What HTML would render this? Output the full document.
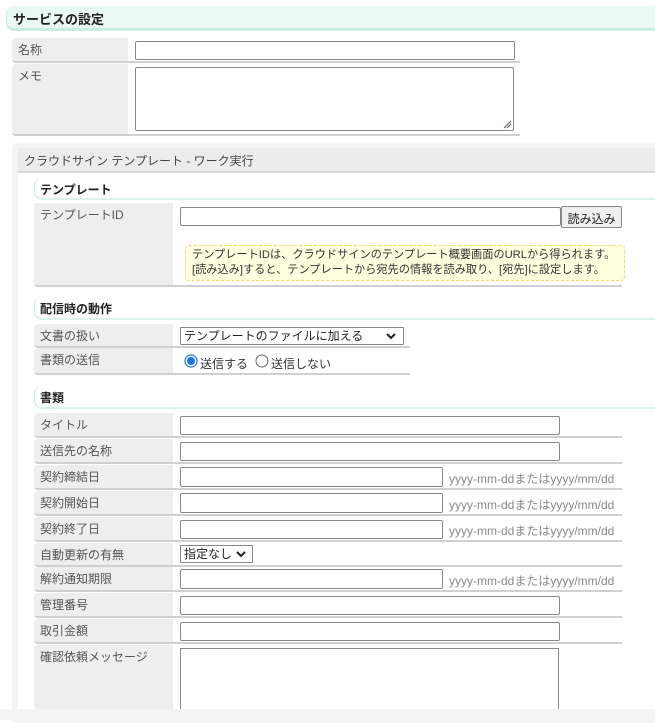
<!DOCTYPE html>
<html><head><meta charset="utf-8">
<style>
*{box-sizing:border-box;margin:0;padding:0}
body{width:655px;height:720px;background:#fff;font-family:"Liberation Sans","Noto Sans CJK JP",sans-serif;font-size:12px;color:#333;position:relative;overflow:hidden}
.a{position:absolute}
.h1{left:6px;top:6px;width:660px;height:25px;background:#eaf8f3;border:1px solid #c8eee0;border-right:none;border-top:none;border-bottom:3px solid #c8eee0;border-radius:8px 0 0 8px;font-weight:bold;font-size:13px;padding:3px 0 0 6px;color:#222}
.lab{background:#eeeeee;color:#555;padding:3px 0 0 6px;border-radius:4px 0 0 4px}
.row{border-bottom:2px solid #d0d0d0;border-radius:0 0 0 4px}
.inp{background:#fff;border:1px solid #888;border-radius:2px}
.sec{background:#fff;border:1px solid #c8eee0;border-right:none;border-top:none;border-bottom:2px solid #d8f3ea;border-radius:8px 0 0 8px;font-weight:bold;font-size:12px;padding:3px 0 0 5px;color:#222}
.hint{color:#888;font-size:12px}
</style></head><body>
<div class="a h1">サービスの設定</div>

<div class="a row" style="left:12px;top:38px;width:508px;height:25px"></div>
<div class="a lab" style="left:12px;top:38px;width:116px;height:23px">名称</div>
<div class="a inp" style="left:135px;top:41px;width:380px;height:19px"></div>
<div class="a row" style="left:12px;top:64px;width:508px;height:72px"></div>
<div class="a lab" style="left:12px;top:64px;width:116px;height:70px">メモ</div>
<div class="a inp" style="left:135px;top:67px;width:379px;height:64px"></div>
<svg class="a" style="left:502px;top:119px" width="10" height="10"><path d="M2 9L9 2M5 9L9 5" stroke="#555" stroke-width="1"/></svg>

<div class="a" style="left:12px;top:143px;width:650px;height:580px;background:#f4f4f4;border-radius:5px"></div>
<div class="a" style="left:18px;top:148px;width:640px;height:25px;background:#ececec;border-bottom:2px solid #d8d8d8;padding:4px 0 0 6px;color:#444">クラウドサイン テンプレート - ワーク実行</div>
<div class="a" style="left:18px;top:173px;width:640px;height:536px;background:#fff"></div>

<div class="a sec" style="left:34px;top:178px;width:625px;height:22px">テンプレート</div>
<div class="a row" style="left:34px;top:203px;width:588px;height:84px"></div>
<div class="a lab" style="left:34px;top:203px;width:139px;height:82px">テンプレートID</div>
<div class="a inp" style="left:180px;top:207px;width:381px;height:19px"></div>
<div class="a" style="left:561px;top:206px;width:61px;height:22px;background:#f0f0f0;border:1px solid #888;border-radius:2px;text-align:center;padding-top:3px;color:#222">読み込み</div>
<div class="a" style="left:185px;top:245px;width:440px;height:36px;background:#ffffe0;border:1px dashed #e6dc70;border-radius:4px;padding:2px 0 0 6px;line-height:15px;color:#333;font-size:11.2px;white-space:nowrap;overflow:hidden">テンプレートIDは、クラウドサインのテンプレート概要画面のURLから得られます。<br>[読み込み]すると、テンプレートから宛先の情報を読み取り、[宛先]に設定します。</div>

<div class="a sec" style="left:34px;top:297px;width:625px;height:23px">配信時の動作</div>
<div class="a row" style="left:34px;top:324px;width:376px;height:24px"></div>
<div class="a lab" style="left:34px;top:324px;width:139px;height:22px">文書の扱い</div>
<div class="a inp" style="left:180px;top:327px;width:224px;height:18px;border-radius:1px;padding:0 0 0 3px;font-size:12px;line-height:16px;color:#222">テンプレートのファイルに加える</div>
<svg class="a" style="left:386px;top:332px" width="10" height="8"><path d="M1 2L5 6L9 2" stroke="#222" stroke-width="2" fill="none"/></svg>
<div class="a row" style="left:34px;top:348px;width:376px;height:27px"></div>
<div class="a lab" style="left:34px;top:348px;width:139px;height:25px">書類の送信</div>
<svg class="a" style="left:184px;top:354px" width="14" height="14"><circle cx="7" cy="7" r="6" fill="#fff" stroke="#1a73e8" stroke-width="1.2"/><circle cx="7" cy="7" r="4" fill="#1a73e8"/></svg>
<div class="a" style="left:200px;top:355px;font-size:12px;color:#333">送信する</div>
<svg class="a" style="left:255px;top:354px" width="14" height="14"><circle cx="7" cy="7" r="6" fill="#fff" stroke="#666" stroke-width="1"/></svg>
<div class="a" style="left:271px;top:355px;font-size:12px;color:#333">送信しない</div>

<div class="a sec" style="left:34px;top:386px;width:625px;height:23px">書類</div>

<div class="a row" style="left:34px;top:413px;width:588px;height:25px"></div>
<div class="a lab" style="left:34px;top:413px;width:139px;height:23px">タイトル</div>
<div class="a inp" style="left:180px;top:416px;width:380px;height:19px"></div>
<div class="a row" style="left:34px;top:439px;width:588px;height:25px"></div>
<div class="a lab" style="left:34px;top:439px;width:139px;height:23px">送信先の名称</div>
<div class="a inp" style="left:180px;top:442px;width:380px;height:19px"></div>
<div class="a row" style="left:34px;top:465px;width:588px;height:25px"></div>
<div class="a lab" style="left:34px;top:465px;width:139px;height:23px">契約締結日</div>
<div class="a inp" style="left:180px;top:467px;width:263px;height:20px"></div>
<div class="a hint" style="left:449px;top:470px">yyyy-mm-ddまたはyyyy/mm/dd</div>
<div class="a row" style="left:34px;top:491px;width:588px;height:25px"></div>
<div class="a lab" style="left:34px;top:491px;width:139px;height:23px">契約開始日</div>
<div class="a inp" style="left:180px;top:493px;width:263px;height:20px"></div>
<div class="a hint" style="left:449px;top:496px">yyyy-mm-ddまたはyyyy/mm/dd</div>
<div class="a row" style="left:34px;top:517px;width:588px;height:25px"></div>
<div class="a lab" style="left:34px;top:517px;width:139px;height:23px">契約終了日</div>
<div class="a inp" style="left:180px;top:520px;width:263px;height:19px"></div>
<div class="a hint" style="left:449px;top:522px">yyyy-mm-ddまたはyyyy/mm/dd</div>
<div class="a row" style="left:34px;top:543px;width:588px;height:24px"></div>
<div class="a lab" style="left:34px;top:543px;width:139px;height:22px">自動更新の有無</div>
<div class="a inp" style="left:180px;top:545px;width:73px;height:18px;border-radius:1px;padding:0 0 0 3px;font-size:12px;line-height:16px;color:#222">指定なし</div>
<svg class="a" style="left:236px;top:550px" width="10" height="8"><path d="M1 2L5 6L9 2" stroke="#222" stroke-width="2" fill="none"/></svg>
<div class="a row" style="left:34px;top:567px;width:588px;height:25px"></div>
<div class="a lab" style="left:34px;top:567px;width:139px;height:23px">解約通知期限</div>
<div class="a inp" style="left:180px;top:569px;width:263px;height:20px"></div>
<div class="a hint" style="left:449px;top:572px">yyyy-mm-ddまたはyyyy/mm/dd</div>
<div class="a row" style="left:34px;top:593px;width:588px;height:25px"></div>
<div class="a lab" style="left:34px;top:593px;width:139px;height:23px">管理番号</div>
<div class="a inp" style="left:180px;top:596px;width:380px;height:19px"></div>
<div class="a row" style="left:34px;top:619px;width:588px;height:25px"></div>
<div class="a lab" style="left:34px;top:619px;width:139px;height:23px">取引金額</div>
<div class="a inp" style="left:180px;top:622px;width:380px;height:19px"></div>
<div class="a lab" style="left:34px;top:645px;width:139px;height:64px">確認依頼メッセージ</div>
<div class="a" style="left:180px;top:648px;width:379px;height:61px;border:1px solid #888;border-bottom:none;background:#fff"></div>
<div class="a" style="left:0;top:709px;width:655px;height:11px;background:#f4f4f4"></div>
</body></html>
